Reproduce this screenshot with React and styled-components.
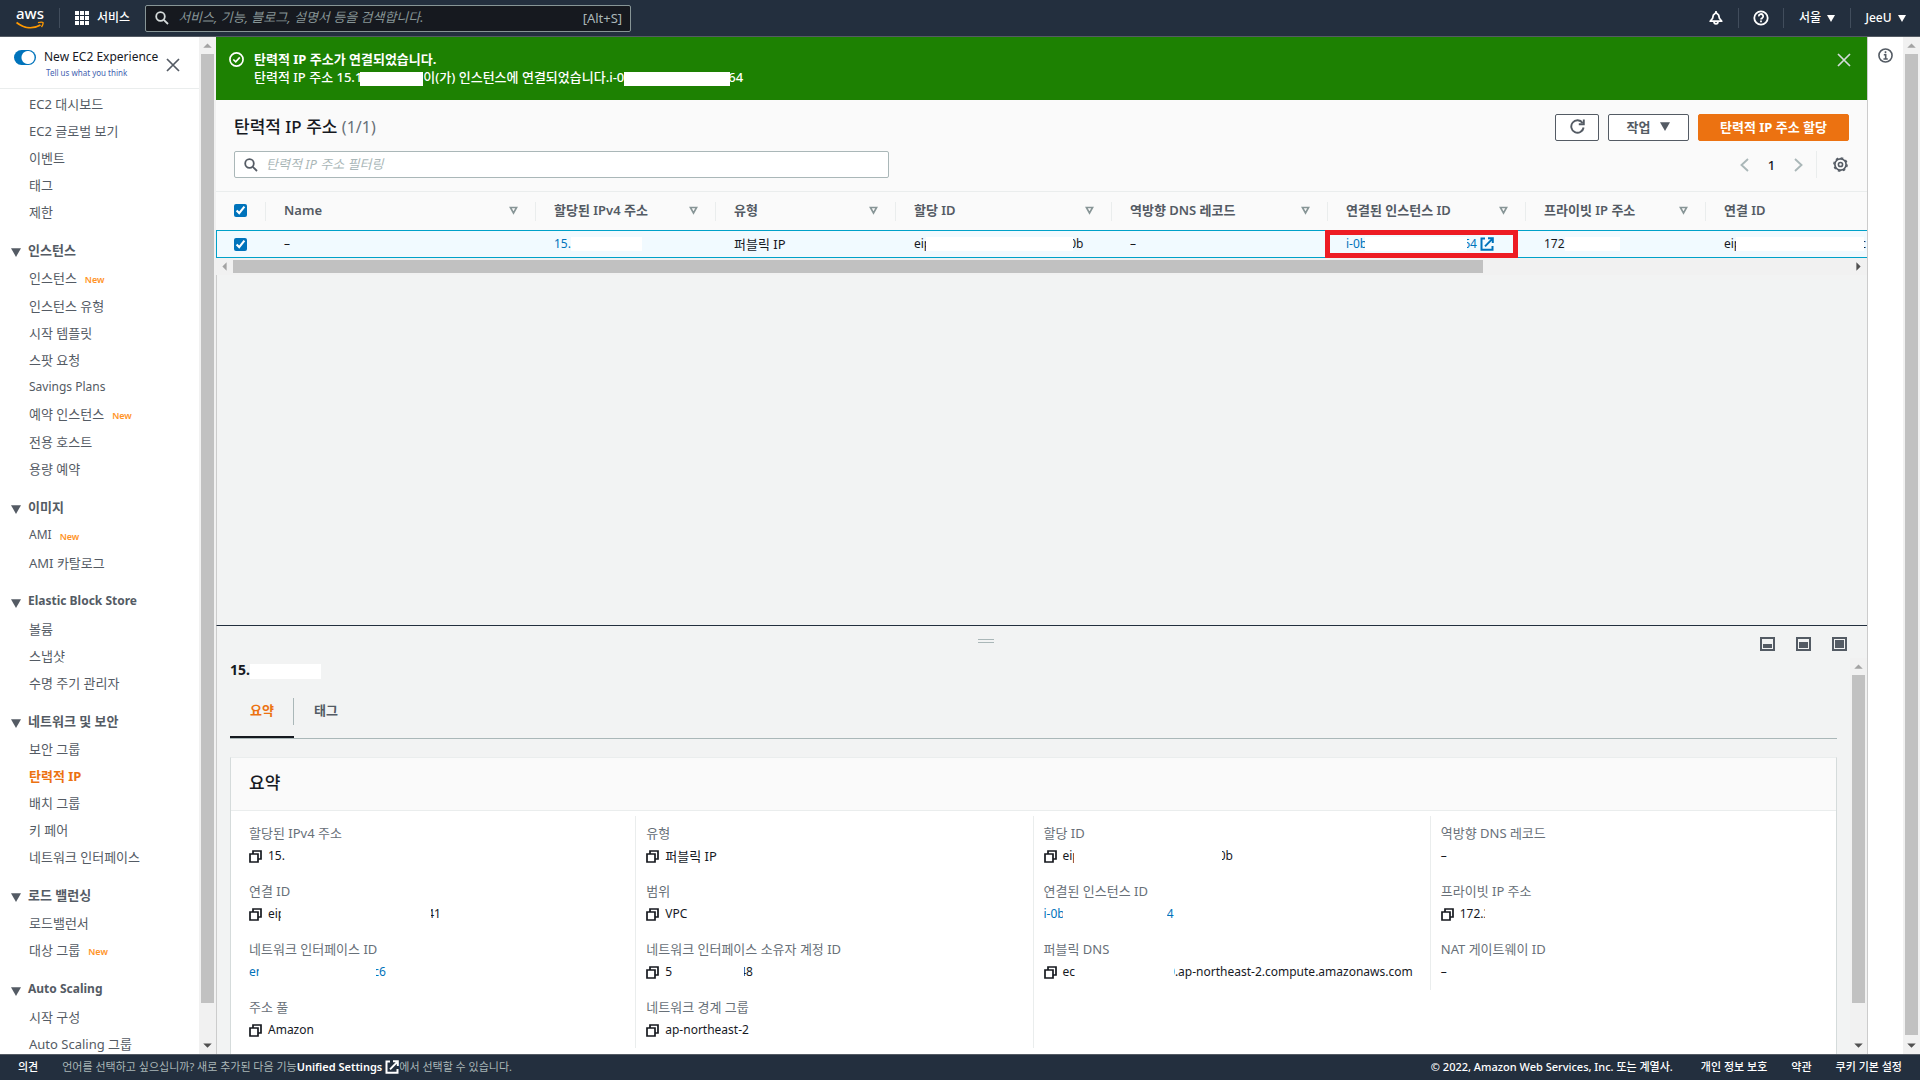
import styled, { createGlobalStyle } from "styled-components";

const GlobalStyle = createGlobalStyle`
    *, *::before, *::after{
        box-sizing: border-box;
    }
    body{
        margin: 0;
        background: #fff;
        color: #16191f;
        font-family: "Noto Sans", "Noto Sans CJK KR", sans-serif;
        font-size: 13px;
        line-height: 20px;
    }
    button, input{
        font-family: inherit;
        font-size: inherit;
        line-height: inherit;
        color: inherit;
    }
    button{
        background: none;
        border: none;
        padding: 0;
        cursor: pointer;
    }
    a{
        color: inherit;
        text-decoration: none;
    }
    svg{
        display: block;
        flex: none;
    }
`;

const MENU = [
    {
        items: [
            { name: "EC2 대시보드" },
            { name: "EC2 글로벌 보기" },
            { name: "이벤트" },
            { name: "태그" },
            { name: "제한" },
        ],
    },
    {
        title: "인스턴스",
        items: [
            { name: "인스턴스", isNew: true },
            { name: "인스턴스 유형" },
            { name: "시작 템플릿" },
            { name: "스팟 요청" },
            { name: "Savings Plans" },
            { name: "예약 인스턴스", isNew: true },
            { name: "전용 호스트" },
            { name: "용량 예약" },
        ],
    },
    {
        title: "이미지",
        items: [{ name: "AMI", isNew: true }, { name: "AMI 카탈로그" }],
    },
    {
        title: "Elastic Block Store",
        items: [{ name: "볼륨" }, { name: "스냅샷" }, { name: "수명 주기 관리자" }],
    },
    {
        title: "네트워크 및 보안",
        items: [
            { name: "보안 그룹" },
            { name: "탄력적 IP", active: true },
            { name: "배치 그룹" },
            { name: "키 페어" },
            { name: "네트워크 인터페이스" },
        ],
    },
    {
        title: "로드 밸런싱",
        items: [{ name: "로드밸런서" }, { name: "대상 그룹", isNew: true }],
    },
    {
        title: "Auto Scaling",
        items: [{ name: "시작 구성" }, { name: "Auto Scaling 그룹" }],
    },
];

const COLUMNS = [
    { name: "Name", width: 270 },
    { name: "할당된 IPv4 주소", width: 180 },
    { name: "유형", width: 180 },
    { name: "할당 ID", width: 216 },
    { name: "역방향 DNS 레코드", width: 216 },
    { name: "연결된 인스턴스 ID", width: 198 },
    { name: "프라이빗 IP 주소", width: 180 },
    { name: "연결 ID", width: 240 },
];

// hide: [width, overlap on the left, overlap on the right]
const DETAILS = [
    [
        { label: "할당된 IPv4 주소", copy: true, start: "15." },
        { label: "연결 ID", copy: true, start: "eip", hide: [150, 4, 4], end: "41" },
        { label: "네트워크 인터페이스 ID", link: true, start: "en", hide: [117, 4, 3], end: "c6" },
        { label: "주소 풀", copy: true, start: "Amazon" },
    ],
    [
        { label: "유형", copy: true, start: "퍼블릭 IP" },
        { label: "범위", copy: true, start: "VPC" },
        { label: "네트워크 인터페이스 소유자 계정 ID", copy: true, start: "5", hide: [72, 0, 5], end: "48" },
        { label: "네트워크 경계 그룹", copy: true, start: "ap-northeast-2" },
    ],
    [
        { label: "할당 ID", copy: true, start: "eip", hide: [148, 6, 3], end: "0b" },
        { label: "연결된 인스턴스 ID", link: true, start: "i-0b", hide: [104, 2, 0], end: "4" },
        { label: "퍼블릭 DNS", copy: true, start: "ec", hide: [99, 0, 6], end: "0.ap-northeast-2.compute.amazonaws.com" },
    ],
    [
        { label: "역방향 DNS 레코드", start: "–" },
        { label: "프라이빗 IP 주소", copy: true, start: "172.3", hide: [20, 5, 0] },
        { label: "NAT 게이트웨이 ID", start: "–" },
    ],
];

const isLatin = (text) => /^[ -~–]*$/.test(text);

/* icons */

const SearchIcon = ({ color }) => (
    <svg width="14" height="14" viewBox="0 0 14 14" fill="none" stroke={color} strokeWidth="1.8">
        <circle cx="5.5" cy="5.5" r="4.3" />
        <path d="M8.8 8.8 13 13" />
    </svg>
);

const CloseIcon = ({ color }) => (
    <svg width="14" height="14" viewBox="0 0 14 14" fill="none" stroke={color} strokeWidth="1.7">
        <path d="M1 1 13 13M13 1 1 13" />
    </svg>
);

const ExternalIcon = () => (
    <svg width="14" height="14" viewBox="0 0 14 14" fill="none" stroke="currentColor" strokeWidth="2">
        <path d="M5 1.5H1.5V12.8H12.5V9" />
        <path d="M8 1.2H12.8V6M12.6 1.6 5 9.4" />
    </svg>
);

const CopyIcon = () => (
    <svg width="13" height="13" viewBox="0 0 13 13" fill="none" stroke="#16191f" strokeWidth="1.7">
        <path d="M4 4V1H12V9H9" />
        <path d="M1 4H9V12H1Z" />
    </svg>
);

const Caret = ({ size = 8 }) => (
    <svg width={size} height={size - 1} viewBox="0 0 8 7" fill="currentColor">
        <path d="M0 0H8L4 7Z" />
    </svg>
);

const SortIcon = () => (
    <svg width="9" height="9" viewBox="0 0 9 9" fill="none" stroke="#879596" strokeWidth="1.6">
        <path d="M1.4 1.5H7.6L4.5 7Z" />
    </svg>
);

const GridIcon = () => (
    <svg width="14" height="14" viewBox="0 0 14 14" fill="#fff">
        {[0, 5, 10].map((y) => [0, 5, 10].map((x) => <rect key={`${x}-${y}`} x={x} y={y} width="4" height="4" />))}
    </svg>
);

const BellIcon = () => (
    <svg width="14" height="14" viewBox="0 0 14 14" fill="none" stroke="#fff" strokeWidth="1.7">
        <path d="M1.2 10.2 3.6 7.2 4.3 4.2 7 1.6 9.7 4.2 10.4 7.2 12.8 10.2Z" strokeLinejoin="round" />
        <path d="M7 0V2" />
        <path d="M5 10.8a2 2 0 0 0 4 0" />
    </svg>
);

const HelpIcon = () => (
    <svg width="16" height="16" viewBox="0 0 16 16" fill="none" stroke="#fff" strokeWidth="1.8">
        <circle cx="8" cy="8" r="6.7" />
        <path d="M5.8 6.4a2.2 2.2 0 1 1 3.4 1.7C8.3 8.6 8 8.9 8 9.6" />
        <path d="M8 10.6V12.2" />
    </svg>
);

const InfoIcon = () => (
    <svg width="15" height="15" viewBox="0 0 16 16" fill="none" stroke="#545b64" strokeWidth="1.7">
        <circle cx="8" cy="8" r="7" />
        <path d="M8 3.5V5.5M6.2 7.2H8.2V11.5M5.8 11.7H10.4" />
    </svg>
);

const CheckIcon = () => (
    <svg width="15" height="15" viewBox="0 0 16 16" fill="none" stroke="#fff" strokeWidth="1.8">
        <circle cx="8" cy="8" r="7" />
        <path d="M4.6 8 7.2 10.5 11.5 5.8" />
    </svg>
);

const RefreshIcon = () => (
    <svg width="15" height="15" viewBox="0 0 15 15" fill="none" stroke="#545b64" strokeWidth="1.9">
        <path d="M13.6 8.5A6.2 6.2 0 1 1 12.6 4" />
        <path d="M13.8 0.5V5.2H8.8" />
    </svg>
);

const GearIcon = () => (
    <svg width="15" height="15" viewBox="0 0 16 16" fill="none" stroke="#545b64">
        <circle cx="8" cy="8" r="6" strokeWidth="1.8" />
        <circle cx="8" cy="8" r="7.1" strokeWidth="1.5" strokeDasharray="2.8 2.776" />
        <circle cx="8" cy="8" r="2.2" strokeWidth="1.7" />
    </svg>
);

const Chevron = ({ next }) => (
    <svg width="9" height="14" viewBox="0 0 9 14" fill="none" stroke="#aab7b8" strokeWidth="1.9">
        <path d={next ? "M1 1 7.5 7 1 13" : "M8 1 1.5 7 8 13"} />
    </svg>
);

const DockIcon = ({ fill }) => (
    <svg width="15" height="14" viewBox="0 0 15 14">
        <rect x="1" y="1" width="13" height="12" fill="none" stroke="#545b64" strokeWidth="2" />
        <rect x="3" y={11 - fill} width="9" height={fill} fill="#545b64" />
    </svg>
);

const Smile = () => (
    <svg width="28" height="9" viewBox="0 0 28 9" fill="none" stroke="#ff9900">
        <path d="M0.5 1.5C8 7.5 17 8.3 24.5 4" strokeWidth="1.8" />
        <path d="M22 1.6C24.5 0.9 26.3 0.9 27 1.5 27.3 2.8 26.6 4.5 25.5 6" strokeWidth="1.3" />
    </svg>
);

const ScrollBar = ({ length, horizontal }) => (
    <Track $horizontal={horizontal} aria-hidden="true">
        <Arrow $turn={horizontal ? -90 : 0} $color="#a3a3a3"><path d="M4 10H12L8 6Z" /></Arrow>
        <Rail $horizontal={horizontal}>
            <Thumb $horizontal={horizontal} $length={length} />
        </Rail>
        <Arrow $turn={horizontal ? 90 : 180} $color="#505050"><path d="M4 10H12L8 6Z" /></Arrow>
    </Track>
);

const Detail = ({ item }) => (
    <Item>
        <Label>{item.label}</Label>
        <Value $link={item.link} $latin={isLatin(item.start)}>
            {item.copy && <button aria-label="복사"><CopyIcon /></button>}
            {item.link ? <a href="#detail">{item.start}</a> : <span>{item.start}</span>}
            {item.hide && <Mask $w={item.hide[0]} $l={item.hide[1]} $r={item.hide[2]} />}
            {item.end && <span>{item.end}</span>}
        </Value>
    </Item>
);

const App = () => {
    return (
        <Page>
            <GlobalStyle />
            <TopBar>
                <Logo href="#home">
                    <span>aws</span>
                    <Smile />
                </Logo>
                <Divider />
                <Services>
                    <GridIcon />
                    서비스
                </Services>
                <GlobalSearch>
                    <SearchIcon color="#d5dbdb" />
                    <input type="text" aria-label="검색" placeholder="서비스, 기능, 블로그, 설명서 등을 검색합니다." />
                    <span>[Alt+S]</span>
                </GlobalSearch>
                <TopRight>
                    <TopButton $w={45} aria-label="알림"><BellIcon /></TopButton>
                    <Divider />
                    <TopButton $w={44} aria-label="도움말"><HelpIcon /></TopButton>
                    <Divider />
                    <TopButton $w={66}>서울 <Caret /></TopButton>
                    <Divider />
                    <TopButton $w={69}>JeeU <Caret /></TopButton>
                </TopRight>
            </TopBar>

            <Body>
                <Sidebar>
                    <Nav>
                        <Experience>
                            <Switch type="checkbox" id="experience" defaultChecked />
                            <div>
                                <label htmlFor="experience">New EC2 Experience</label>
                                <a href="#feedback">Tell us what you think</a>
                            </div>
                            <button aria-label="닫기"><CloseIcon color="#545b64" /></button>
                        </Experience>
                        <Menu>
                            {MENU.map((group, i) => (
                                <Group key={i}>
                                    {group.title && (
                                        <GroupTitle $latin={isLatin(group.title)}>
                                            <Caret size={10} />
                                            {group.title}
                                        </GroupTitle>
                                    )}
                                    {group.items.map((item) => (
                                        <MenuLink
                                            key={item.name}
                                            href="#menu"
                                            $active={item.active}
                                            $new={item.isNew}
                                            $latin={isLatin(item.name)}
                                        >
                                            {item.name}
                                            {item.isNew && <small>New</small>}
                                        </MenuLink>
                                    ))}
                                </Group>
                            ))}
                        </Menu>
                    </Nav>
                    <ScrollBar length="96.5%" />
                </Sidebar>

                <Main>
                    <Flash>
                        <CheckIcon />
                        <div>
                            <b>탄력적 IP 주소가 연결되었습니다.</b>
                            <p>
                                탄력적 IP 주소 15.1<Mask $w={63} $l={2} />이(가) 인스턴스에 연결되었습니다.i-0<Mask $w={106} $r={2} />64
                            </p>
                        </div>
                        <button aria-label="닫기"><CloseIcon color="#d5dbdb" /></button>
                    </Flash>

                    <Toolbar>
                        <ToolRow>
                            <h1>탄력적 IP 주소 <span>(1/1)</span></h1>
                            <Buttons>
                                <Button $w={44} aria-label="새로 고침"><RefreshIcon /></Button>
                                <Button $w={81}>작업 <Caret size={10} /></Button>
                                <Button $w={151} $primary>탄력적 IP 주소 할당</Button>
                            </Buttons>
                        </ToolRow>
                        <ToolRow>
                            <Filter>
                                <SearchIcon color="#545b64" />
                                <input type="text" aria-label="필터" placeholder="탄력적 IP 주소 필터링" />
                            </Filter>
                            <Pager>
                                <button aria-label="이전"><Chevron /></button>
                                <button>1</button>
                                <button aria-label="다음"><Chevron next /></button>
                                <button aria-label="기본 설정"><GearIcon /></button>
                            </Pager>
                        </ToolRow>
                    </Toolbar>

                    <TableWrap>
                        <Table>
                            <colgroup>
                                <Col $w={50} />
                                {COLUMNS.map((c) => <Col key={c.name} $w={c.width} />)}
                            </colgroup>
                            <thead>
                                <tr>
                                    <th><Tick type="checkbox" aria-label="모두 선택" defaultChecked /></th>
                                    {COLUMNS.map((c) => (
                                        <th key={c.name}><Head>{c.name}<SortIcon /></Head></th>
                                    ))}
                                </tr>
                            </thead>
                            <tbody>
                                <tr>
                                    <td><Tick type="checkbox" aria-label="선택" defaultChecked /></td>
                                    <td>–</td>
                                    <td><Cell $link><a href="#ip">15.</a><Mask $w={71} /></Cell></td>
                                    <td><Korean>퍼블릭 IP</Korean></td>
                                    <td><Cell>eip<Mask $w={147} $l={5} $r={4} />0b</Cell></td>
                                    <td>–</td>
                                    <td>
                                        <Cell $link>
                                            <a href="#instance">i-0b</a><Mask $w={102} $l={2} $r={4} />64
                                            <ExternalIcon />
                                        </Cell>
                                        <Highlight />
                                    </td>
                                    <td><Cell>172<Mask $w={55} /></Cell></td>
                                    <td><Cell>eip<Mask $w={128} $l={5} $r={4} />c</Cell></td>
                                </tr>
                            </tbody>
                        </Table>
                    </TableWrap>
                    <ScrollBar length="77.3%" horizontal />
                    <Blank />

                    <Split>
                        <SplitBar>
                            <Grip />
                            <button aria-label="최소"><DockIcon fill={4} /></button>
                            <button aria-label="중간"><DockIcon fill={6} /></button>
                            <button aria-label="최대"><DockIcon fill={8} /></button>
                        </SplitBar>
                        <SplitBody>
                            <SplitContent>
                                <h2>15.<Mask $w={71} $tall /></h2>
                                <Tabs>
                                    <Tab $active>요약</Tab>
                                    <Tab>태그</Tab>
                                </Tabs>
                                <Card>
                                    <CardHead><h3>요약</h3></CardHead>
                                    <Columns>
                                        {DETAILS.map((col, i) => (
                                            <Column key={i}>
                                                {col.map((item) => <Detail key={item.label} item={item} />)}
                                            </Column>
                                        ))}
                                    </Columns>
                                </Card>
                            </SplitContent>
                            <ScrollBar length="90.7%" />
                        </SplitBody>
                    </Split>
                </Main>

                <HelpRail>
                    <button aria-label="정보"><InfoIcon /></button>
                </HelpRail>
                <ScrollBar length="99.8%" />
            </Body>

            <Footer>
                <a href="#opinion">의견</a>
                <p>
                    언어를 선택하고 싶으십니까? 새로 추가된 다음 기능
                    <a href="#settings">Unified Settings <ExternalIcon /></a>
                    에서 선택할 수 있습니다.
                </p>
                <span>© 2022, Amazon Web Services, Inc. 또는 계열사.</span>
                <a href="#privacy">개인 정보 보호</a>
                <a href="#terms">약관</a>
                <a href="#cookies">쿠키 기본 설정</a>
            </Footer>
        </Page>
    );
};

const Page = styled.div`
    display: flex;
    flex-direction: column;
    height: 100vh;
    overflow: hidden;
`;

const TopBar = styled.header`
    display: flex;
    align-items: center;
    flex: none;
    height: 37px;
    padding-left: 16px;
    background-color: #232f3e;
    border-bottom: 1px solid #545b64;
    color: #fff;
`;

const Logo = styled.a`
    width: 43px;
    & > span{
        display: block;
        height: 14px;
        font-size: 15px;
        font-weight: 500;
        line-height: 12px;
    }
`;

const Divider = styled.span`
    width: 1px;
    height: 20px;
    background-color: #414d5c;
`;

const Services = styled.button`
    display: flex;
    align-items: center;
    gap: 8px;
    margin: 0 15px;
    font-size: 12px;
    font-weight: 500;
    line-height: 20px;
`;

const GlobalSearch = styled.div`
    display: flex;
    align-items: center;
    flex: 0 1 486px;
    height: 27px;
    padding: 0 8px 0 9px;
    background-color: #16191f;
    border: 1px solid #879596;
    border-radius: 2px;
    color: #aab7b8;
    & > input{
        flex: 1;
        min-width: 0;
        padding: 0 0 2px 9px;
        background: none;
        border: none;
        outline: none;
    }
    & > input::placeholder{
        color: #879596;
        font-style: italic;
    }
`;

const TopRight = styled.div`
    display: flex;
    align-items: center;
    margin-left: auto;
`;

const TopButton = styled.button`
    display: flex;
    align-items: center;
    justify-content: center;
    gap: 6px;
    width: ${(p) => p.$w}px;
    font-size: 12px;
    font-weight: 500;
`;

const Body = styled.div`
    display: flex;
    flex: 1;
    min-height: 0;
`;

const Sidebar = styled.aside`
    display: flex;
    flex: none;
    width: 216px;
`;

const Nav = styled.nav`
    flex: 1;
    overflow: hidden;
    color: #545b64;
`;

const Experience = styled.div`
    display: flex;
    align-items: flex-start;
    height: 52px;
    padding: 10px 19px 0 14px;
    border-bottom: 1px solid #eaeded;
    & > div{
        flex: 1;
        padding-left: 8px;
        white-space: nowrap;
    }
    label{
        display: block;
        color: #16191f;
        font-size: 12px;
    }
    a{
        display: block;
        padding-left: 2px;
        color: #3f5fb0;
        font-size: 8px;
        line-height: 12px;
    }
    & > button{
        padding-top: 11px;
    }
`;

const Switch = styled.input`
    appearance: none;
    width: 22px;
    height: 15px;
    margin: 3px 0 0;
    border-radius: 8px;
    background: radial-gradient(circle at 14px 50%, #fff 6px, #0073bb 7px);
`;

const Menu = styled.div`
    padding-top: 1px;
`;

const Group = styled.div`
    display: flex;
    flex-direction: column;
    padding-bottom: 11px;
`;

const GroupTitle = styled.button`
    display: flex;
    align-items: center;
    gap: 7px;
    height: 28px;
    padding-left: 11px;
    color: #545b64;
    font-size: ${(p) => (p.$latin ? 12 : 13)}px;
    font-weight: 700;
    text-align: left;
    & > svg{
        margin-top: 4px;
    }
`;

const MenuLink = styled.a`
    display: flex;
    align-items: center;
    gap: 8px;
    height: ${(p) => (p.$new ? 28 : 27)}px;
    padding-left: 29px;
    white-space: nowrap;
    color: ${(p) => (p.$active ? "#ec7211" : "#545b64")};
    font-size: ${(p) => (p.$latin ? 12 : 13)}px;
    font-weight: ${(p) => (p.$active ? 700 : 400)};
    & > small{
        padding-top: 3px;
        color: #ff9326;
        font-size: 9px;
        font-weight: 600;
    }
`;

const Main = styled.main`
    display: flex;
    flex-direction: column;
    flex: 1;
    min-width: 0;
    background-color: #f2f3f3;
`;

const Flash = styled.div`
    display: flex;
    align-items: flex-start;
    flex: none;
    height: 63px;
    padding: 13px 16px 0 13px;
    background-color: #1d8102;
    color: #fff;
    & > svg{
        margin-top: 2px;
    }
    & > div{
        flex: 1;
        padding-left: 10px;
        line-height: 18px;
    }
    p{
        margin: 0;
        font-weight: 500;
    }
    & > button{
        padding-top: 3px;
    }
`;

const Mask = styled.span`
    display: inline-block;
    flex: none;
    position: relative;
    vertical-align: middle;
    width: ${(p) => p.$w}px;
    height: ${(p) => (p.$tall ? 15 : 14)}px;
    margin-left: -${(p) => p.$l || 0}px;
    margin-right: -${(p) => p.$r || 0}px;
    background-color: #fff;
`;

const Toolbar = styled.section`
    flex: none;
    height: 92px;
    padding: 14px 18px 0 18px;
    background-color: #fafafa;
    border-bottom: 1px solid #eaeded;
`;

const ToolRow = styled.div`
    display: flex;
    align-items: center;
    justify-content: space-between;
    height: 27px;
    margin-bottom: 10px;
    h1{
        margin: 0;
        padding-bottom: 2px;
        font-size: 17px;
        font-weight: 500;
    }
    h1 span{
        color: #687078;
        font-size: 16px;
        font-weight: 400;
    }
`;

const Buttons = styled.div`
    display: flex;
    gap: 9px;
`;

const Button = styled.button`
    display: flex;
    align-items: center;
    justify-content: center;
    gap: 10px;
    width: ${(p) => p.$w}px;
    height: 27px;
    padding-bottom: 2px;
    background-color: ${(p) => (p.$primary ? "#ec7211" : "#fff")};
    border: 1px solid ${(p) => (p.$primary ? "#ec7211" : "#545b64")};
    border-radius: 2px;
    color: ${(p) => (p.$primary ? "#fff" : "#545b64")};
    font-weight: 700;
    white-space: nowrap;
`;

const Filter = styled.div`
    display: flex;
    align-items: center;
    flex: 0 1 655px;
    height: 27px;
    padding-left: 9px;
    background-color: #fff;
    border: 1px solid #aab7b8;
    border-radius: 2px;
    & > input{
        flex: 1;
        min-width: 0;
        padding: 0 0 2px 8px;
        background: none;
        border: none;
        outline: none;
    }
    & > input::placeholder{
        color: #aab7b8;
        font-style: italic;
    }
`;

const Pager = styled.div`
    display: flex;
    align-items: center;
    & > button{
        display: flex;
        align-items: center;
        justify-content: center;
        width: 27px;
        height: 27px;
        font-weight: 500;
    }
    & > button:last-child{
        justify-content: flex-end;
        width: 33px;
        margin-left: 4px;
        padding-right: 1px;
        border-left: 1px solid #eaeded;
    }
`;

const TableWrap = styled.div`
    flex: none;
    overflow: hidden;
`;

const Table = styled.table`
    width: 100%;
    table-layout: fixed;
    border-collapse: separate;
    border-spacing: 0;
    background-color: #fafafa;
    th, td{
        padding: 0 0 0 18px;
        text-align: left;
        white-space: nowrap;
    }
    th{
        height: 38px;
        padding-bottom: 2px;
        color: #545b64;
        font-weight: 600;
        background: linear-gradient(#eaeded, #eaeded) right center / 1px 19px no-repeat;
    }
    td{
        position: relative;
        height: 28px;
        background-color: #f1faff;
        border-top: 1px solid #00a1c9;
        border-bottom: 1px solid #00a1c9;
        font-size: 12px;
    }
    td:first-child{
        border-left: 1px solid #00a1c9;
        padding-left: 17px;
    }
`;

const Col = styled.col`
    width: ${(p) => p.$w}px;
`;

const Tick = styled.input`
    display: block;
    width: 13px;
    height: 13px;
    margin: 0;
    accent-color: #0073bb;
`;

const Head = styled.div`
    display: flex;
    align-items: center;
    justify-content: space-between;
    padding-right: 18px;
`;

const Cell = styled.div`
    display: flex;
    align-items: center;
    color: ${(p) => (p.$link ? "#0073bb" : "#16191f")};
    & > svg{
        margin-left: 3px;
    }
`;

const Korean = styled.span`
    font-size: 13px;
`;

/* red frame over the associated instance cell */
const Highlight = styled.span`
    position: absolute;
    inset: -1px 8px -1px -3px;
    border: 5px solid #ed1c24;
`;

const Track = styled.div`
    display: flex;
    flex: none;
    flex-direction: ${(p) => (p.$horizontal ? "row" : "column")};
    ${(p) => (p.$horizontal ? "height: 17px;" : "width: 17px;")}
    background-color: #f1f1f1;
`;

const Rail = styled.div`
    flex: 1;
    min-height: 0;
    padding: ${(p) => (p.$horizontal ? "2px 0" : "0 2px")};
`;

const Thumb = styled.div`
    width: ${(p) => (p.$horizontal ? p.$length : "100%")};
    height: ${(p) => (p.$horizontal ? "100%" : p.$length)};
    background-color: #c1c1c1;
`;

const Arrow = styled.svg.attrs({ width: 17, height: 17, viewBox: "0 0 16 16" })`
    fill: ${(p) => p.$color};
    transform: rotate(${(p) => p.$turn}deg);
`;

const Blank = styled.div`
    flex: 1;
    min-height: 0;
    border-left: 1px solid #ccc;
`;

const Split = styled.section`
    display: flex;
    flex-direction: column;
    flex: none;
    height: 429px;
    border-top: 1px solid #232f3e;
    border-left: 1px solid #ccc;
`;

const SplitBar = styled.div`
    display: grid;
    grid-template-columns: 1fr 16px 16px 16px;
    column-gap: 20px;
    align-items: center;
    flex: none;
    height: 32px;
    padding: 4px 19px 0 0;
`;

const Grip = styled.span`
    justify-self: center;
    width: 16px;
    height: 4px;
    margin: 0 0 7px 14px;
    border: solid #aab7b8;
    border-width: 1px 0;
`;

const SplitBody = styled.div`
    display: flex;
    flex: 1;
    min-height: 0;
`;

const SplitContent = styled.div`
    flex: 1;
    min-width: 0;
    overflow: hidden;
    padding: 2px 13px 0 13px;
    h2{
        margin: 0;
        font-size: 14px;
        line-height: 20px;
        font-weight: 700;
    }
`;

const Tabs = styled.div`
    display: flex;
    height: 59px;
    border-bottom: 1px solid #aab7b8;
`;

const Tab = styled.button`
    padding: 3px 20px 0;
    color: ${(p) => (p.$active ? "#ec7211" : "#545b64")};
    font-weight: 700;
    border-bottom: 2px solid ${(p) => (p.$active ? "#16191f" : "transparent")};
    background: ${(p) => (p.$active ? "linear-gradient(#aab7b8, #aab7b8) right 18px / 1px 27px no-repeat" : "none")};
`;

const Card = styled.section`
    min-height: 420px;
    margin-top: 18px;
    background-color: #fff;
    border: 1px solid #d5dbdb;
    border-top-color: #eaeded;
`;

const CardHead = styled.div`
    display: flex;
    align-items: center;
    height: 53px;
    padding: 0 0 2px 18px;
    background-color: #fafafa;
    border-bottom: 1px solid #eaeded;
    h3{
        margin: 0;
        font-size: 17px;
        font-weight: 500;
    }
`;

const Columns = styled.div`
    display: grid;
    grid-template-columns: repeat(4, minmax(0, 1fr));
    align-items: start;
    padding: 5px 8px 0;
`;

const Column = styled.dl`
    margin: 0;
    padding-left: 10px;
    border-right: 1px solid #eaeded;
    &:last-child{
        border-right: none;
    }
`;

const Item = styled.div`
    height: 58px;
    padding-top: 6px;
    white-space: nowrap;
`;

const Label = styled.dt`
    color: #687078;
    line-height: 22px;
`;

const Value = styled.dd`
    display: flex;
    align-items: center;
    margin: 0;
    font-size: ${(p) => (p.$latin ? 12 : 13)}px;
    line-height: 24px;
    color: ${(p) => (p.$link ? "#0073bb" : "#16191f")};
    & > button{
        margin-right: 6px;
    }
`;

const HelpRail = styled.aside`
    flex: none;
    width: 36px;
    padding: 11px 10px;
    border-left: 1px solid #ccc;
`;

const Footer = styled.footer`
    display: flex;
    align-items: center;
    flex: none;
    height: 26px;
    padding: 0 18px 2px;
    background-color: #232f3e;
    border-top: 1px solid #545b64;
    color: #fff;
    font-size: 11px;
    font-weight: 500;
    white-space: nowrap;
    & > p{
        display: flex;
        flex: 1;
        margin: 0 0 0 24px;
        color: #aab7b8;
        font-weight: 400;
    }
    & > p a{
        display: flex;
        align-items: center;
        gap: 3px;
        color: #fff;
        font-weight: 600;
    }
    & > span{
        margin-right: 4px;
    }
    & > span ~ a{
        margin-left: 24px;
    }
`;

export default App;
